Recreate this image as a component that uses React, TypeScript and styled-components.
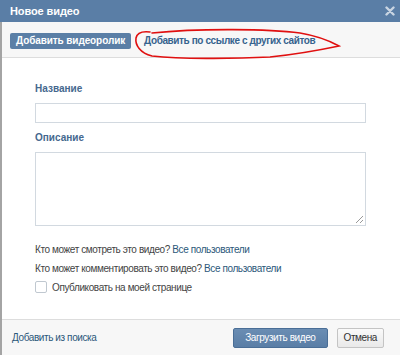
import React from 'react';
import styled, {createGlobalStyle} from "styled-components";

const GlobalStyle = createGlobalStyle`
  html, body {
    margin: 0;
    padding: 0;
    background: #ffffff;
  }
  body {
    font-family: "Liberation Sans", Arial, sans-serif;
    font-size: 10px;
    color: #333333;
  }
`

const CloseIcon = () => (
  <svg width="10" height="10" viewBox="0 0 10 10">
    <path d="M1.5 1.5 L8.5 8.5 M8.5 1.5 L1.5 8.5" stroke="#c9d5e2" strokeWidth="2.4" strokeLinecap="round"/>
  </svg>
);

// hand-drawn red mark around the second tab
const Scribble = () => (
  <ScribbleSvg width="220" height="34" viewBox="130 28 220 34">
    <path
      d="M152 33 C 200 28, 270 29, 300 33 C 318 36, 330 41, 339 46 C 320 50, 300 54, 270 57 C 230 59, 180 59, 152 56 C 140 53, 135 45, 136 38 C 137 33, 142 31, 150 32"
      fill="none" stroke="#e01010" strokeWidth="1.6" strokeLinecap="round"/>
  </ScribbleSvg>
);

export default function App() {
  return (
    <>
      <GlobalStyle/>
      <Dialog>
        <TitleBar>
          <Title>Новое видео</Title>
          <CloseIcon/>
        </TitleBar>
        <Frame>
          <Tabs>
            <TabButton>Добавить видеоролик</TabButton>
            <TabLink>Добавить по ссылке с других сайтов</TabLink>
            <Scribble/>
          </Tabs>
          <Body>
            <Label>Название</Label>
            <TextInput/>
            <Label>Описание</Label>
            <TextArea/>
            <Privacy>Кто может смотреть это видео? <Link>Все пользователи</Link></Privacy>
            <Privacy>Кто может комментировать это видео? <Link>Все пользователи</Link></Privacy>
            <CheckRow>
              <CheckBox/>
              <span>Опубликовать на моей странице</span>
            </CheckRow>
          </Body>
          <Footer>
            <FooterLink>Добавить из поиска</FooterLink>
            <Buttons>
              <Button $primary>Загрузить видео</Button>
              <Button>Отмена</Button>
            </Buttons>
          </Footer>
        </Frame>
      </Dialog>
    </>
  );
}

const Dialog = styled.div`
  width: 400px;
  height: 355px;
  display: flex;
  flex-direction: column;
  overflow: hidden;
`
const TitleBar = styled.div`
  height: 22px;
  flex-shrink: 0;
  background: #5a7ea6;
  display: flex;
  align-items: center;
  justify-content: space-between;
  padding: 0 5px 0 10px;
`
const Title = styled.div`
  color: #ffffff;
  font-weight: bold;
  font-size: 11px;
  letter-spacing: -0.1px;
`
const Frame = styled.div`
  flex: 1;
  display: flex;
  flex-direction: column;
  border-left: 2px solid #a4a4a4;
`
const Tabs = styled.div`
  position: relative;
  height: 35px;
  flex-shrink: 0;
  background: #f7f7f7;
  border-bottom: 1px solid #dddddd;
  display: flex;
  align-items: center;
  padding: 0 8px;
  gap: 13px;
`
const TabButton = styled.div`
  background: #5b7fa6;
  color: #ffffff;
  font-weight: bold;
  font-size: 10px;
  letter-spacing: -0.1px;
  height: 16px;
  line-height: 16px;
  padding: 0 6px;
  border-radius: 2px;
  margin-top: 2px;
`
const TabLink = styled.div`
  color: #36638e;
  font-weight: bold;
  font-size: 10px;
  letter-spacing: -0.4px;
  margin-top: 2px;
`
const ScribbleSvg = styled.svg`
  position: absolute;
  left: 128px;
  top: 6px;
  pointer-events: none;
`
const Body = styled.div`
  flex: 1;
  background: #ffffff;
  padding: 24px 0 0 33px;
  display: flex;
  flex-direction: column;
  align-items: flex-start;
`
const Label = styled.div`
  color: #45688e;
  font-weight: bold;
  font-size: 10px;
  line-height: 14px;
  margin-bottom: 7px;
`
const TextInput = styled.div`
  box-sizing: border-box;
  width: 331px;
  height: 20px;
  border: 1px solid #d2d9e0;
  margin-bottom: 8px;
`
const TextArea = styled.div`
  position: relative;
  box-sizing: border-box;
  width: 331px;
  height: 74px;
  border: 1px solid #d2d9e0;
  margin-bottom: 17px;
  &::after {
    content: "";
    position: absolute;
    right: 2px;
    bottom: 2px;
    width: 7px;
    height: 7px;
    background: linear-gradient(135deg, transparent 45%, #999 45%, #999 55%, transparent 55%, transparent 75%, #999 75%, #999 85%, transparent 85%);
  }
`
const Privacy = styled.div`
  color: #444444;
  letter-spacing: -0.4px;
  line-height: 14px;
  margin-bottom: 5px;
`
const Link = styled.span`
  color: #2b587a;
`
const CheckRow = styled.div`
  display: flex;
  align-items: center;
  gap: 5px;
  color: #444444;
  letter-spacing: -0.4px;
`
const CheckBox = styled.div`
  box-sizing: border-box;
  width: 12px;
  height: 12px;
  border: 1px solid #c0c8d0;
  border-radius: 2px;
  background: #ffffff;
`
const Footer = styled.div`
  height: 36px;
  flex-shrink: 0;
  box-sizing: border-box;
  background: #f7f7f7;
  border-top: 1px solid #dddddd;
  display: flex;
  align-items: center;
  justify-content: space-between;
  padding: 0 16px 0 10px;
`
const FooterLink = styled.div`
  color: #2b587a;
  letter-spacing: -0.4px;
`
const Buttons = styled.div`
  display: flex;
  gap: 9px;
`
const Button = styled.div<{ $primary?: boolean }>`
  box-sizing: border-box;
  height: 20px;
  line-height: 18px;
  letter-spacing: -0.4px;
  padding: 0 ${p => p.$primary ? '11px' : '6px'};
  border-radius: 2px;
  border: 1px solid ${p => p.$primary ? '#4a6e96' : '#c4c4c4'};
  background: ${p => p.$primary
    ? 'linear-gradient(#6a8db3, #5a7ea6)'
    : 'linear-gradient(#fafafa, #e9e9e9)'};
  color: ${p => p.$primary ? '#ffffff' : '#333333'};
`
